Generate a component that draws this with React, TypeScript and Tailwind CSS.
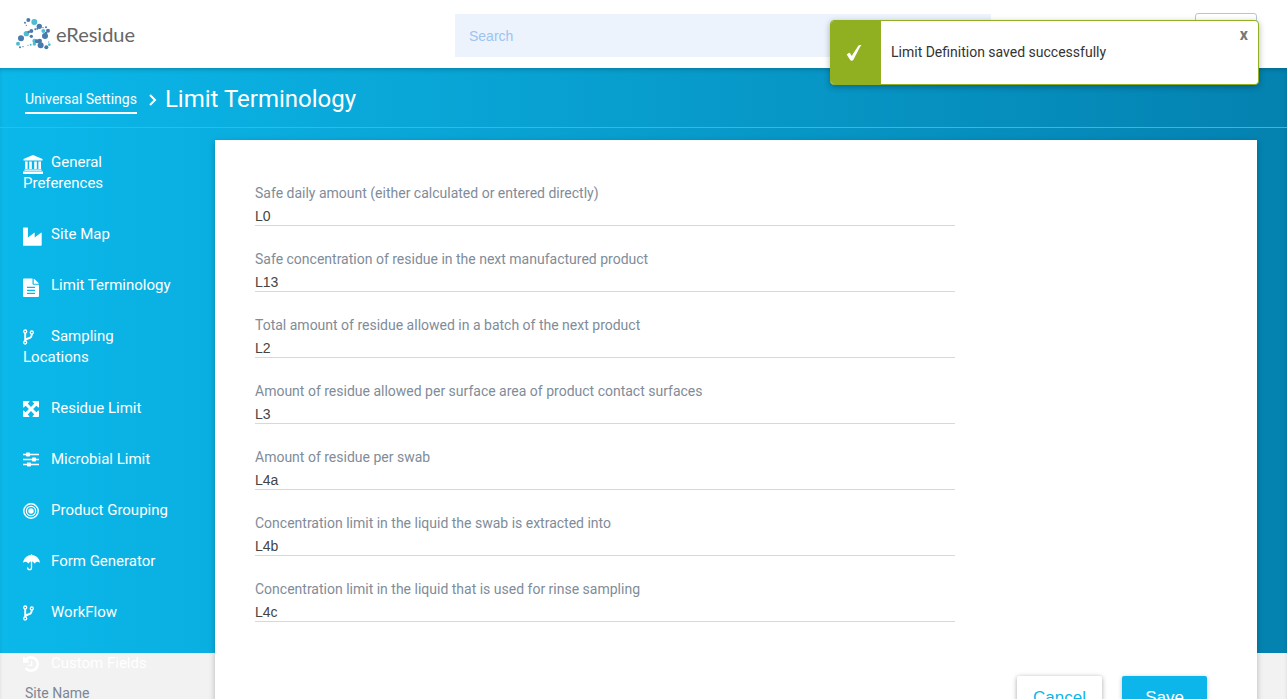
import type { ReactNode } from "react";

const NAVY = "#4a7aab";
const TEAL = "#4fbcd3";

const dots: [number, number, number, string][] = [
  [75, 68, 3, NAVY], [85, 60, 6, NAVY], [103, 66, 9, TEAL], [118, 79, 8, NAVY],
  [79, 76, 2, NAVY], [129, 83, 2, NAVY], [138, 82, 3, NAVY], [130, 93, 6, TEAL],
  [144, 92, 6, NAVY], [106, 88, 3, NAVY], [94, 93, 6, NAVY], [79, 101, 8, TEAL],
  [94, 109, 5, NAVY], [135, 108, 9, NAVY], [63, 115, 9, NAVY], [54, 131, 6, TEAL],
  [104, 123, 7, TEAL], [103, 132, 5, TEAL], [119, 123, 7, NAVY], [122, 136, 9, NAVY],
  [139, 142, 6, NAVY], [148, 134, 4, TEAL], [146, 126, 2, TEAL], [92, 134, 3, TEAL],
  [84, 136, 2, TEAL], [60, 142, 3, NAVY], [69, 140, 2, NAVY], [86, 96, 4, NAVY],
  [138, 99, 4, NAVY], [112, 86, 3, NAVY], [111, 124, 6, NAVY],
];

function LogoMark() {
  return (
    <svg viewBox="48 51 105 102" className="h-[34px] w-[35px]" aria-hidden="true">
      {dots.map(([x, y, r, fill]) => (
        <circle key={`${x}-${y}`} cx={x} cy={y} r={r} fill={fill} />
      ))}
    </svg>
  );
}

function Icon({ w, h, children }: { w: number; h: number; children: ReactNode }) {
  return (
    <svg viewBox={`0 0 ${w} ${h}`} width={w} height={h} fill="currentColor" className="inline-block">
      {children}
    </svg>
  );
}

const bank = (
  <Icon w={20} h={19}>
    <path d="M10 0 19.5 4v1.6H.5V4zM2 6.600h2.600V14H2zM6.200 6.600h2.600V14H6.200zM11.200 6.600h2.600V14h-2.600zM15.400 6.600H18V14h-2.600zM1.400 14.400h17.200v1.300H1.400zM0 16.600h20V19H0z" />
  </Icon>
);
const factory = (
  <Icon w={19} h={19}>
    <path d="M0 1.200Q0 .5.7.5h3.600Q5 .5 5 1.200v9.300l6.200-4.800q.5-.3.500.4v4.400l6.200-4.800q.6-.3.800.4v12q0 .7-.7.700H.7Q0 18.800 0 18.100z" />
  </Icon>
);
const doc = (
  <Icon w={16} h={19}>
    <path
      fillRule="evenodd"
      d="M1 .5h8.500v5.300q0 1 1 1H16V18q0 1-1 1H1q-1 0-1-1V1.500q0-1 1-1zM4 8.700v1.200h8V8.700zM4 11.700v1.200h8v-1.200zM4 14.700v1.200h8v-1.200zM10.700.7q.6.200 1 .6l3.500 3.500q.4.400.6.900h-5.100z"
    />
  </Icon>
);
const fork = (
  <Icon w={11} h={16}>
    <g fill="none" stroke="currentColor" strokeWidth="1.3">
      <circle cx="2.200" cy="2.500" r="1.500" />
      <circle cx="2.200" cy="13.500" r="1.500" />
      <circle cx="8.800" cy="3.500" r="1.500" />
    </g>
    <path fill="none" stroke="currentColor" strokeWidth="1.900" d="M2.200 4v8M8.800 5c0 3.400-1.500 3.800-3.800 4.500-1.600.5-2.600 1-2.800 2.200" />
  </Icon>
);
const expand = (
  <Icon w={16} h={16}>
    <path d="M0 .8Q0 0 .8 0h5.100q1 .2.400 1L4.700 2.600 8 5.900l3.300-3.300L9.700 1q-.6-.8.400-1h5.100q.8 0 .8.800v5.100q-.2 1-1 .4l-1.600-1.600L10.100 8l3.300 3.300L15 9.700q.8-.6 1 .4v5.100q0 .8-.8.800h-5.100q-1-.2-.4-1l1.600-1.600L8 10.100l-3.300 3.300L6.300 15q.6.800-.4 1H.8Q0 16 0 15.200v-5.100q.2-1 1-.4l1.600 1.600L5.900 8 2.600 4.700 1 6.300q-.8.600-1-.4z" />
  </Icon>
);
const sliders = (
  <Icon w={16} h={15}>
    <path d="M0 1.700h16v1.600H0zM0 6.700h16v1.600H0zM0 11.700h16v1.600H0z" />
    <rect x="3" y="0.500" width="4" height="4" rx=".7" />
    <rect x="9" y="5.500" width="4" height="4" rx=".7" />
    <rect x="4" y="10.500" width="4" height="4" rx=".7" />
  </Icon>
);
const target = (
  <Icon w={16} h={16}>
    <circle cx="8" cy="8" r="7.200" fill="none" stroke="currentColor" strokeWidth="1.400" />
    <circle cx="8" cy="8" r="4.600" fill="none" stroke="currentColor" strokeWidth="1.300" />
    <circle cx="8" cy="8" r="2.700" />
  </Icon>
);
const umbrella = (
  <Icon w={17} h={17}>
    <path d="M7.900 1V.7q0-.6.6-.6t.6.600V1c3.600.3 6.900 2.800 7.800 7q.1.700-.5.400c-1.400-1.200-3.200-1-4.300.8q-.4.500-.7 0C10.400 7.700 9.500 7.400 8.500 7.400S6.600 7.700 5.600 9.200q-.3.500-.7 0C3.800 7.400 2 7.200.6 8.400Q0 8.700.1 8 1.300 3.500 4.600 1.900 6.100 1.100 7.900 1z" />
    <path d="M8.500 7v6.700q0 2-1.900 2T4.700 13.800" fill="none" stroke="currentColor" strokeWidth="1.300" strokeLinecap="round" />
  </Icon>
);
const history = (
  <svg viewBox="0 128 1536 1536" fill="currentColor" className="inline-block size-4">
    <path d="M1536 896q0 156-61 298t-164 245-245 164-298 61q-172 0-327-72.500t-264-204.500q-7-10-6.500-22.500t8.500-20.500l137-138q10-9 25-9 16 2 23 12 73 95 179 147t225 52q104 0 198.500-40.500t163.500-109.500 109.500-163.500 40.500-198.500-40.500-198.500-109.500-163.500-163.500-109.500-198.500-40.500q-98 0-188 35.500t-160 101.500l137 138q31 30 14 69-17 40-59 40h-448q-26 0-45-19t-19-45v-448q0-42 40-59 39-17 69 14l130 129q107-101 244.500-156.500t284.500-55.500q156 0 298 61t245 164 164 245 61 298zm-640-288v448q0 14-9 23t-23 9h-320q-14 0-23-9t-9-23v-64q0-14 9-23t23-9h224v-352q0-14 9-23t23-9h64q14 0 23 9t9 23z" />
  </svg>
);

const navItems: { label: string; icon: ReactNode }[] = [
  { label: "General Preferences", icon: bank },
  { label: "Site Map", icon: factory },
  { label: "Limit Terminology", icon: doc },
  { label: "Sampling Locations", icon: fork },
  { label: "Residue Limit", icon: expand },
  { label: "Microbial Limit", icon: sliders },
  { label: "Product Grouping", icon: target },
  { label: "Form Generator", icon: umbrella },
  { label: "WorkFlow", icon: fork },
  { label: "Custom Fields", icon: history },
];

const fields = [
  ["Safe daily amount (either calculated or entered directly)", "L0"],
  ["Safe concentration of residue in the next manufactured product", "L13"],
  ["Total amount of residue allowed in a batch of the next product", "L2"],
  ["Amount of residue allowed per surface area of product contact surfaces", "L3"],
  ["Amount of residue per swab", "L4a"],
  ["Concentration limit in the liquid the swab is extracted into", "L4b"],
  ["Concentration limit in the liquid that is used for rinse sampling", "L4c"],
];

function Header() {
  return (
    <header className="flex h-[68px] items-start bg-white pr-[30px] pl-4">
      <a href="#home" className="mt-[17px] flex w-[439px] items-center gap-[5px]">
        <LogoMark />
        <span className="font-[Lato,sans-serif] text-[20px] leading-6 text-[#666]">eResidue</span>
      </a>
      <input
        type="search"
        aria-label="Search"
        placeholder="Search"
        className="mt-3.5 h-[43px] w-[536px] bg-[#ecf3fd] px-3.5 font-['Liberation_Sans',Arial,sans-serif] text-sm outline-none placeholder:text-[#9dc3f0]"
      />
      <button type="button" aria-label="Account" className="mt-[13px] ml-auto h-10 w-[62px] rounded-[3px] border border-[#b4c5d8] bg-white" />
    </header>
  );
}

function Toast() {
  return (
    <div role="status" className="absolute top-5 right-7 flex h-[65px] w-[429px] overflow-hidden rounded-[4px] border border-[#91b021] bg-white shadow-[0_2px_6px_rgba(0,0,0,0.3)]">
      <div className="flex w-[50px] items-center justify-center bg-[#91b021] pr-1 text-white">
        <svg viewBox="0 0 16 18" className="h-[18px] w-4" aria-hidden="true">
          <path fill="currentColor" d="M.7 10.500 2.800 9q.8-.5 1.400.4l1.500 2.600L12.300 1.800Q13 .8 14.200.9h1.300q-.8 1-1.500 2.200L7.700 15.200q-.6 1.500-2 1.500-1.100 0-1.800-1.300z" />
        </svg>
      </div>
      <p className="flex flex-1 items-center pb-0.5 pl-2.5 text-sm text-[#333]">Limit Definition saved successfully</p>
      <button type="button" aria-label="Close" className="mt-1 mr-2.5 h-5 text-base leading-5 font-bold text-[#777]">
        x
      </button>
    </div>
  );
}

function Sidebar() {
  return (
    <aside className="w-[215px] shrink-0 pt-3 text-[15px] leading-[21px]">
      <nav className="flex flex-col gap-[30px] pl-[23px] text-white">
        {navItems.map(({ label, icon }) => (
          <a key={label} href="#settings" className="block w-[155px]">
            <span className="inline-flex h-[21px] w-7 items-start pt-[3px] align-top">{icon}</span>
            {label}
          </a>
        ))}
      </nav>
      <p className="mt-[9px] pb-6 pl-[25px] text-sm leading-[21px] text-[#7b8794]">Site Name</p>
    </aside>
  );
}

export default function App() {
  return (
    <div className="relative min-h-screen bg-[#f2f2f2] font-[Roboto,sans-serif]">
      <Header />
      <main className="bg-[linear-gradient(90deg,#0bb8ea,#0482b0)] bg-[length:100%_585px] bg-no-repeat shadow-[inset_0_3px_5px_-2px_rgba(0,0,0,0.25)]">
        <div className="flex h-[60px] items-start border-b border-[#35b9e3] pl-[25px] text-white">
          <a href="#universal" className="mt-5 h-[26px] border-b-2 border-white text-sm leading-[23px]">
            Universal Settings
          </a>
          <svg viewBox="0 0 8 12" className="mt-[26px] ml-3 h-3 w-2" aria-hidden="true">
            <path d="M1 1l5 5-5 5" fill="none" stroke="currentColor" strokeWidth="2" />
          </svg>
          <h1 className="mt-4 ml-2 text-2xl leading-[30px]">Limit Terminology</h1>
        </div>
        <div className="flex pt-3 pr-[30px]">
          <Sidebar />
          <form className="min-w-0 flex-1 bg-white px-10 pt-[43px] pb-10 shadow-[0_2px_6px_rgba(0,0,0,0.25)]">
            <div className="flex max-w-[700px] flex-col gap-[23px]">
              {fields.map(([label, value], i) => (
                <div key={label} className="flex flex-col">
                  <label htmlFor={`limit-${i}`} className="text-sm leading-5 text-[#7f8c99]">
                    {label}
                  </label>
                  <input
                    id={`limit-${i}`}
                    defaultValue={value}
                    className="h-[23px] border-b border-[#d5d8dc] pt-[3px] font-['Liberation_Sans',Arial,sans-serif] text-sm leading-5 text-[#444] outline-none"
                  />
                </div>
              ))}
            </div>
            <div className="mt-[54px] flex justify-end gap-5 pr-2.5 font-['Liberation_Sans',Arial,sans-serif] text-[17px]">
              <button type="button" className="h-11 w-[85px] rounded-[2px] bg-white text-[#0cb6ea] shadow-[0_1px_5px_rgba(0,0,0,0.35)]">
                Cancel
              </button>
              <button type="submit" className="h-11 w-[85px] rounded-[2px] bg-[#0cb6ea] text-white shadow-[0_1px_4px_rgba(0,0,0,0.25)]">
                Save
              </button>
            </div>
          </form>
        </div>
      </main>
      <Toast />
    </div>
  );
}
